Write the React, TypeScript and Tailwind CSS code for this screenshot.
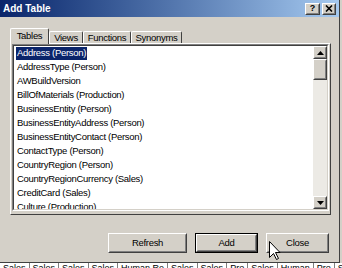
import React from "react"

const tables = [
  "Address (Person)",
  "AddressType (Person)",
  "AWBuildVersion",
  "BillOfMaterials (Production)",
  "BusinessEntity (Person)",
  "BusinessEntityAddress (Person)",
  "BusinessEntityContact (Person)",
  "ContactType (Person)",
  "CountryRegion (Person)",
  "CountryRegionCurrency (Sales)",
  "CreditCard (Sales)",
  "Culture (Production)",
]

const tabs = ["Tables", "Views", "Functions", "Synonyms"]

const strip = ["Sales", "Sales", "Sales", "Sales", "Human Re", "Sales", "Sales", "Pro", "Sales", "Human", "Pro", "Sales"]

function Raised({ children, className }: { children?: React.ReactNode; className?: string }) {
  // classic 3d raised edge: white/dark outer, light/gray inner
  return (
    <div className={`border border-t-white border-l-white border-r-[#404040] border-b-[#404040] bg-[#d4d0c8] ${className ?? ""}`}>
      <div className="w-full h-full border border-t-[#d4d0c8] border-l-[#d4d0c8] border-r-[#808080] border-b-[#808080] flex items-center justify-center">
        {children}
      </div>
    </div>
  )
}

function Button({ label, width, isDefault }: { label: string; width: string; isDefault?: boolean }) {
  const inner = (
    <Raised className={`h-full w-full`}>
      <span className="text-[9.5px] tracking-[-0.3px] text-black">{label}</span>
    </Raised>
  )
  if (isDefault) {
    return <div className={`${width} h-[20px] border border-black`}>{inner}</div>
  }
  return <div className={`${width} h-[20px]`}>{inner}</div>
}

function Cursor() {
  return (
    <svg width="13" height="21" viewBox="0 0 13 21" className="absolute left-[268px] top-[240px]">
      <path
        d="M1.5 1.5 L1.5 17.5 L5.5 13.5 L8.5 19.5 L10.5 18.5 L7.5 12.5 L12 12.5 Z"
        fill="white"
        stroke="black"
        strokeWidth="1"
        strokeLinejoin="miter"
      />
    </svg>
  )
}

export default function App() {
  return (
    <div className="w-[342px] h-[268px] bg-[#d4d0c8] relative overflow-hidden font-['Liberation_Sans',Arial,sans-serif] select-none">
      <div className="w-[340px] h-[263px] border-r border-b border-[#404040] flex flex-col">
        {/* title bar */}
        <div className="h-[17px] flex items-center justify-between pl-[3px] pr-[3px] bg-gradient-to-r from-[#0a246a] to-[#a6caf0]">
          <span className="text-white font-bold text-[10px] leading-none">Add Table</span>
          <div className="flex gap-[2px]">
            <Raised className="w-[15px] h-[12px]">
              <span className="text-[9px] font-bold leading-none text-black">?</span>
            </Raised>
            <Raised className="w-[14px] h-[12px]">
              <svg width="8" height="7" viewBox="0 0 8 7">
                <path d="M1 0.5 L7 6.5 M7 0.5 L1 6.5" stroke="black" strokeWidth="1.6" />
              </svg>
            </Raised>
          </div>
        </div>

        {/* tabs */}
        <div className="pt-[11px] pl-[10px] flex items-end h-[26px]">
          {tabs.map((t, i) =>
            i === 0 ? (
              <div
                key={t}
                className="relative z-10 -mb-px h-[16px] w-[39px] bg-[#d4d0c8] border-t border-l border-white border-r border-r-[#404040] rounded-t-[2px] flex items-center justify-center"
              >
                <span className="text-[9.5px] tracking-[-0.3px] text-black">{t}</span>
              </div>
            ) : (
              <div
                key={t}
                className={`h-[12px] ${i === 1 ? "w-[34px]" : i === 2 ? "w-[48px]" : "w-[51px]"} border-t border-l border-white border-r border-r-[#404040] rounded-t-[2px] flex items-center justify-center`}
              >
                <span className="text-[9.5px] tracking-[-0.3px] text-black leading-none">{t}</span>
              </div>
            ),
          )}
        </div>

        {/* tab panel */}
        <div className="ml-[10px] w-[321px] h-[172px] border-t border-l border-white border-r border-r-[#404040] border-b border-b-[#404040] pl-px pb-[1px]">
          <div className="w-[317px] h-[167px] border border-t-[#808080] border-l-[#808080] border-r-white border-b-white">
            <div className="w-full h-full border border-t-[#404040] border-l-[#404040] border-r-[#d4d0c8] border-b-[#d4d0c8] bg-white flex overflow-hidden">
              <div className="flex-1 pl-[2px] overflow-hidden">
                {tables.map((t, i) => (
                  <div key={t} className="h-[14px] flex items-center">
                    <span
                      className={`px-px h-[13px] flex items-center text-[9.5px] tracking-[-0.3px] whitespace-nowrap ${
                        i === 0 ? "bg-[#0a246a] text-white" : "text-black"
                      }`}
                    >
                      {t}
                    </span>
                  </div>
                ))}
              </div>
              {/* scrollbar */}
              <div className="w-[14px] flex flex-col bg-[#eceae5]">
                <Raised className="h-[13px] w-full">
                  <svg width="7" height="4" viewBox="0 0 7 4">
                    <path d="M3.5 0 L7 4 L0 4 Z" fill="black" />
                  </svg>
                </Raised>
                <Raised className="h-[21px] w-full" />
                <div className="flex-1" />
                <Raised className="h-[13px] w-full">
                  <svg width="7" height="4" viewBox="0 0 7 4">
                    <path d="M0 0 L7 0 L3.5 4 Z" fill="black" />
                  </svg>
                </Raised>
              </div>
            </div>
          </div>
        </div>

        {/* buttons */}
        <div className="mt-[18px] flex justify-end gap-[8px] pr-[10px]">
          <Button label="Refresh" width="w-[79px]" />
          <Button label="Add" width="w-[63px]" isDefault />
          <Button label="Close" width="w-[63px]" />
        </div>
      </div>

      {/* background grid peeking out below */}
      <div className="h-[5px] bg-white overflow-hidden">
        <div className="flex mt-[-1px]">
          {strip.map((s, i) => (
            <span key={i} className="text-[9px] leading-[12px] text-black px-[3px] border-r border-[#808080] whitespace-nowrap">
              {s}
            </span>
          ))}
        </div>
      </div>

      <Cursor />
    </div>
  )
}
